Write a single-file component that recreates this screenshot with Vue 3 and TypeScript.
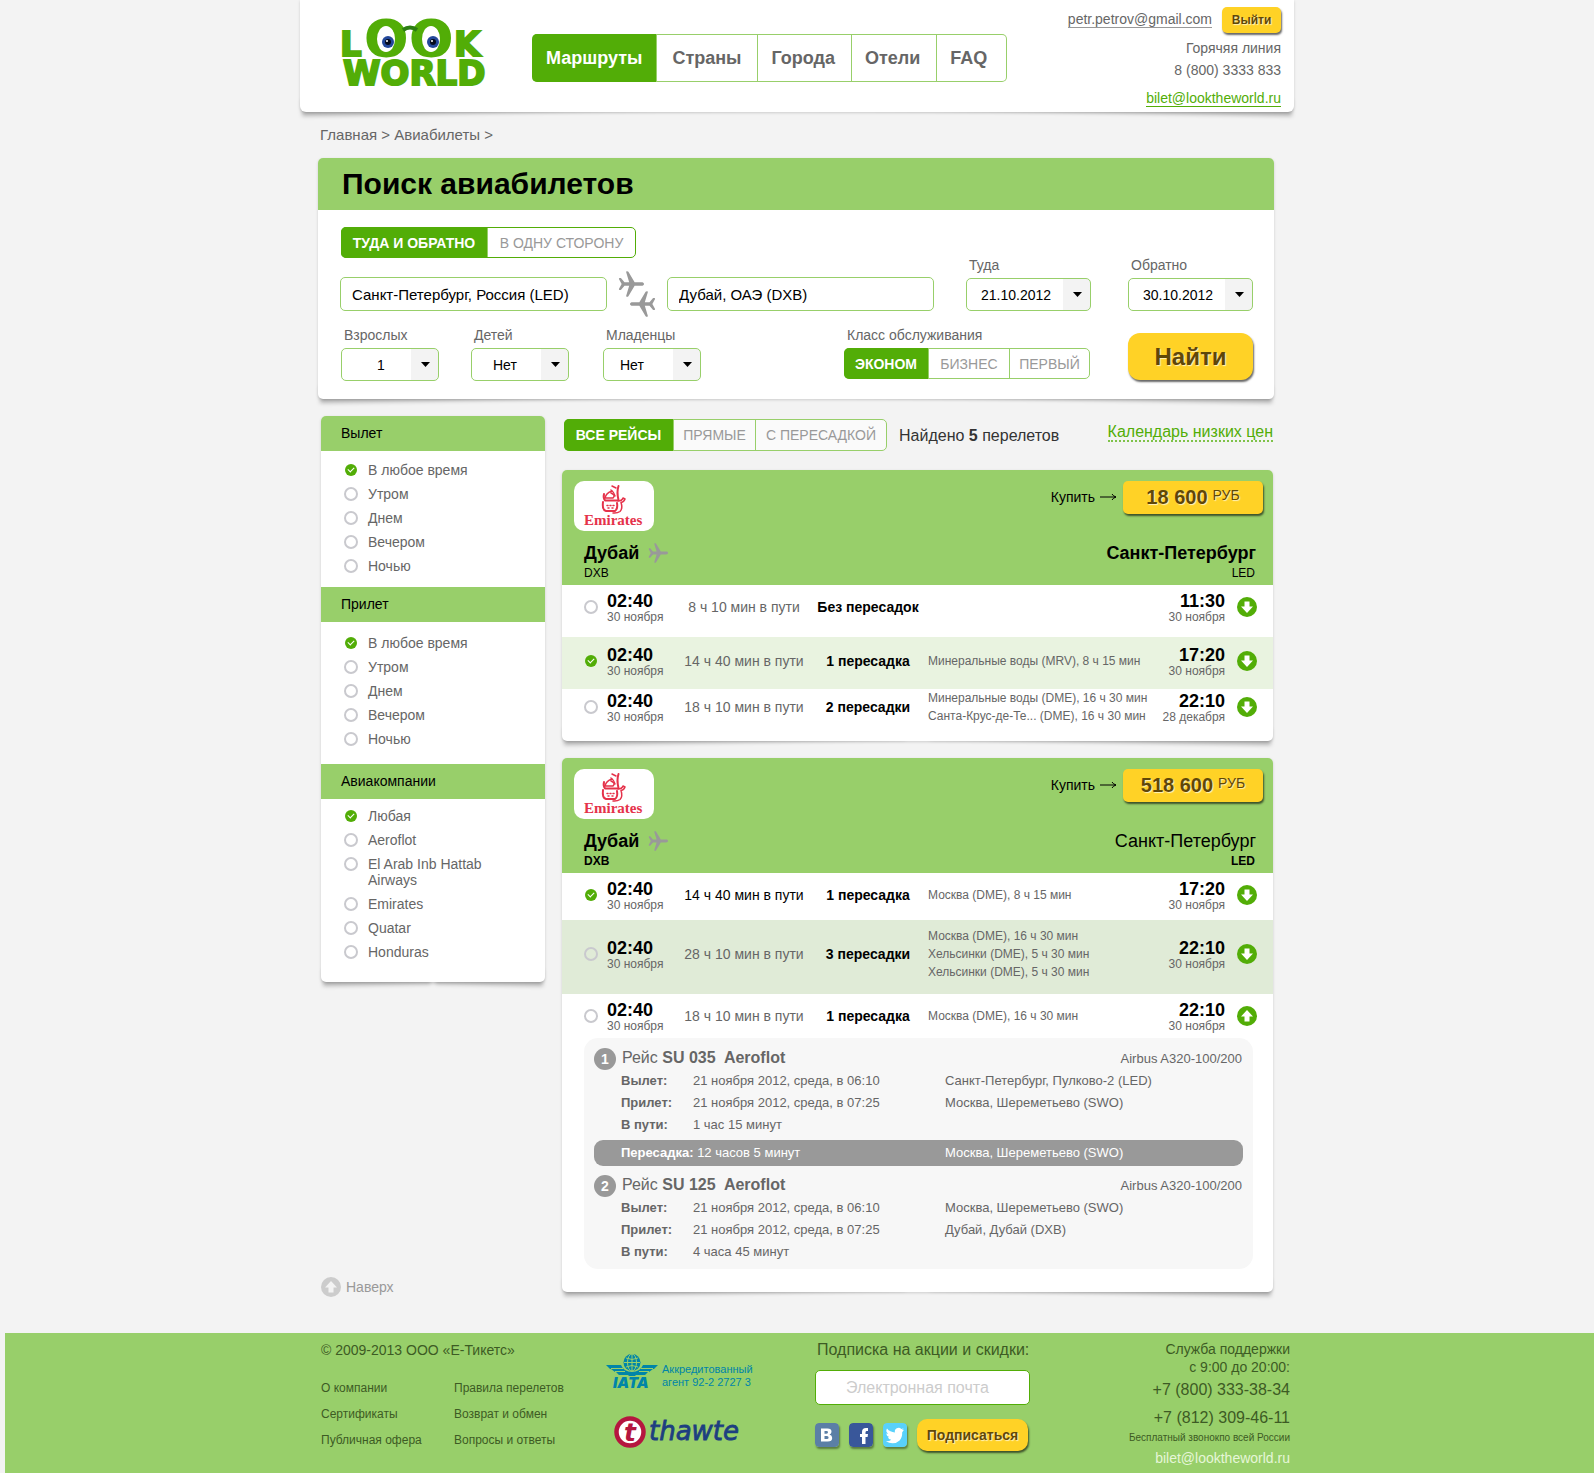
<script setup lang="ts">
import { ref } from 'vue'

interface Flight {
  time: string
  duration: string
  strong?: boolean
  stops: string
  via: string[]
  arrive: string
  arriveDate: string
  tone: string
  open?: boolean
}

interface Card {
  price: string
  boldTo: boolean
  boldCodes: boolean
  picked: number
  flights: Flight[]
  legs: Leg[]
}

interface Leg {
  flight: string
  rows: { label: string; value: string; place: string }[]
  transfer?: { time: string; place: string }
}

const nav = ['Маршруты', 'Страны', 'Города', 'Отели', 'FAQ']
const tripTypes = ['ТУДА И ОБРАТНО', 'В ОДНУ СТОРОНУ']
const classes = ['ЭКОНОМ', 'БИЗНЕС', 'ПЕРВЫЙ']
const stopsTabs = ['ВСЕ РЕЙСЫ', 'ПРЯМЫЕ', 'С ПЕРЕСАДКОЙ']

const trip = ref(0)
const cabin = ref(0)
const stopsTab = ref(0)
const from = ref('Санкт-Петербург, Россия (LED)')
const to = ref('Дубай, ОАЭ (DXB)')

const times = ['В любое время', 'Утром', 'Днем', 'Вечером', 'Ночью']
const filters = ref([
  { id: 'departure', title: 'Вылет', options: times, picked: 0 },
  { id: 'arrival', title: 'Прилет', options: times, picked: 0 },
  {
    id: 'airline',
    title: 'Авиакомпании',
    options: ['Любая', 'Aeroflot', 'El Arab Inb Hattab Airways', 'Emirates', 'Quatar', 'Honduras'],
    picked: 0,
  },
])

const passengers = [
  { id: 'adults', label: 'Взрослых', value: '1' },
  { id: 'children', label: 'Детей', value: 'Нет' },
  { id: 'infants', label: 'Младенцы', value: 'Нет' },
]
const dates = [
  { id: 'there', label: 'Туда', value: '21.10.2012' },
  { id: 'back', label: 'Обратно', value: '30.10.2012' },
]

const cards = ref<Card[]>([
  {
    price: '18 600',
    boldTo: true,
    boldCodes: false,
    picked: 1,
    flights: [
      { time: '02:40', duration: '8 ч 10 мин в пути', stops: 'Без пересадок', via: [], arrive: '11:30', arriveDate: '30 ноября', tone: 'roomy' },
      { time: '02:40', duration: '14 ч 40 мин в пути', stops: '1 пересадка', via: ['Минеральные воды (MRV), 8 ч 15 мин'], arrive: '17:20', arriveDate: '30 ноября', tone: 'picked' },
      { time: '02:40', duration: '18 ч 10 мин в пути', stops: '2 пересадки', via: ['Минеральные воды (DME), 16 ч 30 мин', 'Санта-Крус-де-Те... (DME), 16 ч 30 мин'], arrive: '22:10', arriveDate: '28 декабря', tone: 'last' },
    ],
    legs: [],
  },
  {
    price: '518 600',
    boldTo: false,
    boldCodes: true,
    picked: 0,
    flights: [
      { time: '02:40', duration: '14 ч 40 мин в пути', strong: true, stops: '1 пересадка', via: ['Москва (DME), 8 ч 15 мин'], arrive: '17:20', arriveDate: '30 ноября', tone: 'compact' },
      { time: '02:40', duration: '28 ч 10 мин в пути', stops: '3 пересадки', via: ['Москва (DME), 16 ч 30 мин', 'Хельсинки (DME), 5 ч 30 мин', 'Хельсинки (DME), 5 ч 30 мин'], arrive: '22:10', arriveDate: '30 ноября', tone: 'hover' },
      { time: '02:40', duration: '18 ч 10 мин в пути', stops: '1 пересадка', via: ['Москва (DME), 16 ч 30 мин'], arrive: '22:10', arriveDate: '30 ноября', tone: 'opened', open: true },
    ],
    legs: [
      {
        flight: 'SU 035',
        rows: [
          { label: 'Вылет:', value: '21 ноября 2012, среда, в 06:10', place: 'Санкт-Петербург, Пулково-2 (LED)' },
          { label: 'Прилет:', value: '21 ноября 2012, среда, в 07:25', place: 'Москва, Шереметьево (SWO)' },
          { label: 'В пути:', value: '1 час 15 минут', place: '' },
        ],
        transfer: { time: '12 часов 5 минут', place: 'Москва, Шереметьево (SWO)' },
      },
      {
        flight: 'SU 125',
        rows: [
          { label: 'Вылет:', value: '21 ноября 2012, среда, в 06:10', place: 'Москва, Шереметьево (SWO)' },
          { label: 'Прилет:', value: '21 ноября 2012, среда, в 07:25', place: 'Дубай, Дубай (DXB)' },
          { label: 'В пути:', value: '4 часа 45 минут', place: '' },
        ],
      },
    ],
  },
])

const footerLinks = [
  ['О компании', 'Сертификаты', 'Публичная офера'],
  ['Правила перелетов', 'Возврат и обмен', 'Вопросы и ответы'],
]

const plane =
  'M20 10c0-.9-.8-1.4-2-1.4h-5.2L8 .6C7.6 0 6 0 6.3.9L8.6 8.6H5L2.4 5.6C1.8 5 .3 5.4.8 6.3L2.8 10l-2 3.7c-.5.9 1 1.3 1.6.7L5 11.4h3.6L6.3 19.1c-.3.9 1.3.9 1.7.3l4.8-8H18c1.2 0 2-.5 2-1.4z'
const arrowDown = 'M7.500 4.500h5v5H16L10 16 4 9.500h3.500z'
const arrowUp = 'M7.500 15.500h5v-5H16L10 4 4 10.500h3.500z'
</script>

<template>
  <div class="page">
    <header class="top lifted">
      <a class="logo" href="#" aria-label="Look World">
        <svg width="148" height="72" viewBox="0 0 148 72">
          <g fill="#52ad07" stroke="#52ad07" stroke-width="2" font-family="DejaVu Sans, sans-serif" font-weight="bold">
            <text x="-2" y="41" font-size="34">L</text>
            <text x="23" y="41" font-size="50">O</text>
            <text x="68" y="41" font-size="50">O</text>
            <text x="112" y="41" font-size="34">K</text>
            <text x="1" y="70" font-size="34">WORLD</text>
          </g>
          <path d="M61 15q7-5 14 0" fill="none" stroke="#2c7d12" stroke-width="4" />
          <ellipse cx="44" cy="24" rx="9" ry="13" fill="#fff" />
          <ellipse cx="89" cy="24" rx="9" ry="13" fill="#fff" />
          <g>
            <circle cx="46" cy="27" r="6" fill="#23479a" />
            <circle cx="46" cy="27" r="3" fill="#050a1c" />
            <circle cx="45" cy="26" r="1" fill="#fff" />
            <circle cx="91" cy="27" r="6" fill="#23479a" />
            <circle cx="91" cy="27" r="3" fill="#050a1c" />
            <circle cx="90" cy="26" r="1" fill="#fff" />
          </g>
        </svg>
      </a>
      <nav class="menu">
        <a v-for="(n, i) in nav" :key="n" href="#" :class="{ on: i === 0 }">{{ n }}</a>
      </nav>
      <div class="contacts">
        <div class="account">
          <a href="#" class="user">petr.petrov@gmail.com</a>
          <button type="button" class="yellow exit">Выйти</button>
        </div>
        <span>Горячяя линия</span>
        <span>8 (800) 3333 833</span>
        <a href="#" class="mail">bilet@looktheworld.ru</a>
      </div>
    </header>

    <main class="content">
      <nav class="crumbs"><a href="#">Главная</a> &gt; <a href="#">Авиабилеты</a> &gt;</nav>

      <form class="search lifted" @submit.prevent>
        <h1>Поиск авиабилетов</h1>
        <div class="search-body">
          <div class="seg strong trip">
            <button v-for="(t, i) in tripTypes" :key="t" type="button" :class="{ on: trip === i }" @click="trip = i">{{ t }}</button>
          </div>
          <div class="line route">
            <input v-model="from" type="text" aria-label="Откуда" />
            <svg class="planes" width="38" height="46" viewBox="0 0 38 46" fill="#999">
              <path :d="plane" transform="scale(1.3)" />
              <path :d="plane" transform="translate(38 20) scale(-1.3 1.3)" />
            </svg>
            <input v-model="to" type="text" aria-label="Куда" />
            <div v-for="d in dates" :key="d.id" class="field date">
              <label :for="d.id">{{ d.label }}</label>
              <div class="pick">
                <select :id="d.id"><option>{{ d.value }}</option></select>
                <svg width="9" height="5" viewBox="0 0 9 5"><path d="M0 0h9L4.500 5z" /></svg>
              </div>
            </div>
          </div>
          <div class="line people">
            <div v-for="p in passengers" :key="p.id" class="field" :class="p.id">
              <label :for="p.id">{{ p.label }}</label>
              <div class="pick">
                <select :id="p.id"><option>{{ p.value }}</option></select>
                <svg width="9" height="5" viewBox="0 0 9 5"><path d="M0 0h9L4.500 5z" /></svg>
              </div>
            </div>
            <div class="field cabin">
              <span>Класс обслуживания</span>
              <div class="seg classes">
                <button v-for="(c, i) in classes" :key="c" type="button" :class="{ on: cabin === i }" @click="cabin = i">{{ c }}</button>
              </div>
            </div>
            <button type="submit" class="yellow find">Найти</button>
          </div>
        </div>
      </form>

      <div class="columns">
        <aside>
          <div class="filters lifted">
            <fieldset v-for="f in filters" :key="f.id" :class="f.id">
              <legend>{{ f.title }}</legend>
              <div class="options">
                <label v-for="(o, i) in f.options" :key="o">
                  <input v-model="f.picked" type="radio" :name="f.id" :value="i" /><span>{{ o }}</span>
                </label>
              </div>
            </fieldset>
          </div>
          <a href="#" class="up">
            <svg width="20" height="20" viewBox="0 0 20 20"><circle cx="10" cy="10" r="10" fill="#ccc" /><path :d="arrowUp" fill="#f3f3f3" /></svg>
            Наверх
          </a>
        </aside>

        <section class="results">
          <div class="bar">
            <div class="seg tabs">
              <button v-for="(s, i) in stopsTabs" :key="s" type="button" :class="{ on: stopsTab === i }" @click="stopsTab = i">{{ s }}</button>
            </div>
            <p>Найдено <b>5</b> перелетов</p>
            <a href="#">Календарь низких цен</a>
          </div>

          <article v-for="(c, ci) in cards" :key="ci" class="card lifted">
            <div class="card-head">
              <div class="buy-row">
                <svg class="emirates" width="80" height="50" viewBox="0 0 80 50">
                  <rect width="80" height="50" rx="10" fill="#fff" />
                  <g fill="none" stroke="#e5324a" stroke-width="1.500" stroke-linecap="round" stroke-linejoin="round">
                    <path d="M44.500 5q-2 6 0 14" stroke-width="2" />
                    <path d="M38 5l4 2M37 9q3 2 4 6" />
                    <path d="M38 10q-6 2-7 7h8q3-3-2-5" />
                    <path d="M30 13q-1 4 1 6.500h13" stroke-width="2" />
                    <path d="M29 21q-1 8 3 9h9q3-2 2-8" stroke-width="2" />
                    <path d="M44 20q4 0 5-3l2 1q-1 3-4 3.500 2 6-1 9-3 2-7 1.500" />
                    <path d="M33 24.500h1M36 24.500h1M39 24.500h1M34 27h1M38 27h1" />
                  </g>
                  <text x="10" y="44" fill="#e5324a" font-family="Liberation Serif, serif" font-weight="bold" font-size="15">Emirates</text>
                </svg>
                <span class="buy-label">Купить</span>
                <svg width="17" height="8" viewBox="0 0 17 8"><path d="M0 4h16M12 1q1 2 4 3-3 1-4 3" fill="none" stroke="#000" stroke-width="1" /></svg>
                <button type="button" class="yellow price"><b>{{ c.price }}</b><span>РУБ</span></button>
              </div>
              <div class="cities">
                <h2>Дубай</h2>
                <svg width="20" height="20" viewBox="0 0 20 20"><path :d="plane" fill="#999" /></svg>
                <h2 class="to" :class="{ plain: !c.boldTo }">Санкт-Петербург</h2>
              </div>
              <div class="codes" :class="{ bold: c.boldCodes }"><span>DXB</span><span>LED</span></div>
            </div>
            <table class="flights">
              <colgroup>
                <col class="c-radio" /><col class="c-time" /><col class="c-dur" /><col class="c-stops" /><col /><col class="c-arr" /><col class="c-more" />
              </colgroup>
              <tbody>
                <tr v-for="(f, fi) in c.flights" :key="fi" :class="f.tone">
                  <td class="sel"><input v-model="c.picked" type="radio" :name="'flight' + ci" :value="fi" :aria-label="f.duration" /></td>
                  <td><b class="time">{{ f.time }}</b><span class="day">30 ноября</span></td>
                  <td class="dur" :class="{ dark: f.strong }">{{ f.duration }}</td>
                  <td class="stops">{{ f.stops }}</td>
                  <td class="via"><div v-for="(v, vi) in f.via" :key="vi">{{ v }}</div></td>
                  <td class="arr"><b class="time">{{ f.arrive }}</b><span class="day">{{ f.arriveDate }}</span></td>
                  <td class="more">
                    <button type="button" aria-label="Подробнее">
                      <svg width="20" height="20" viewBox="0 0 20 20"><circle cx="10" cy="10" r="10" fill="#52ad07" /><path :d="f.open ? arrowUp : arrowDown" fill="#fff" /></svg>
                    </button>
                  </td>
                </tr>
              </tbody>
            </table>
            <div v-if="c.legs.length" class="details">
              <div v-for="(l, li) in c.legs" :key="li">
                <div class="leg-head">
                  <span class="num">{{ li + 1 }}</span>
                  <span class="flight">Рейс <b>{{ l.flight }}&nbsp; Aeroflot</b></span>
                  <span class="craft">Airbus A320-100/200</span>
                </div>
                <table class="leg">
                  <tbody>
                    <tr v-for="r in l.rows" :key="r.label">
                      <th scope="row">{{ r.label }}</th>
                      <td>{{ r.value }}</td>
                      <td>{{ r.place }}</td>
                    </tr>
                  </tbody>
                </table>
                <div v-if="l.transfer" class="transfer">
                  <span><b>Пересадка:</b> {{ l.transfer.time }}</span>
                  <span>{{ l.transfer.place }}</span>
                </div>
              </div>
            </div>
          </article>
        </section>
      </div>
    </main>

    <footer>
      <div class="foot">
        <div class="about">
          <p>© 2009-2013 ООО «Е-Тикетс»</p>
          <div class="links">
            <ul v-for="(col, i) in footerLinks" :key="i">
              <li v-for="t in col" :key="t"><a href="#">{{ t }}</a></li>
            </ul>
          </div>
        </div>
        <div class="partners">
          <div class="iata">
            <svg width="53" height="35" viewBox="0 0 53 35" fill="#0085a8">
              <circle cx="26" cy="8.500" r="8.500" />
              <g fill="none" stroke="#98cf6a" stroke-width="1">
                <path d="M26 0v17M18 8.500h16M20 4q6 3 12 0M20 13q6-3 12 0" />
                <ellipse cx="26" cy="8.500" rx="4.500" ry="8.500" />
              </g>
              <path d="M0 11h15q3 7 11 7t11-7h15l-4 4h-1l-4 3h-1l-3 3H30l-1 1h-6l-1-1H13l-3-3H9l-4-3H4z" />
              <path d="M5 14.500h12M9 17.500h10M35 14.500h12M33 17.500h10" stroke="#98cf6a" stroke-width="1" />
              <text x="7" y="34" font-family="Inter, sans-serif" font-weight="900" font-style="italic" font-size="15">IATA</text>
            </svg>
            <span>Аккредитованный<br />агент 92-2 2727 3</span>
          </div>
          <svg class="thawte" width="130" height="34" viewBox="0 0 130 34">
            <circle cx="16" cy="17" r="13.500" fill="#fff" stroke="#b5163f" stroke-width="4.500" />
            <text x="10" y="26" font-family="DejaVu Sans, sans-serif" font-weight="bold" font-style="italic" font-size="25" fill="#b5163f">t</text>
            <text x="35" y="25" font-family="DejaVu Sans, sans-serif" font-style="italic" font-size="26" fill="#1d3f80" stroke="#1d3f80" stroke-width=".8">thawte</text>
          </svg>
        </div>
        <form class="subscribe" @submit.prevent>
          <label for="email">Подписка на акции и скидки:</label>
          <input id="email" type="email" placeholder="Электронная почта" />
          <div class="social">
            <a href="#" aria-label="ВКонтакте">
              <svg width="24" height="24" viewBox="0 0 24 24"><rect width="24" height="24" rx="4" fill="#5b7fa6" /><path d="M6 5.500h6.500q4 0 4 3.200 0 2.100-2 2.900 2.700.7 2.700 3.400 0 3.500-4.500 3.500H6zM9.500 8v2.700h2q1.500 0 1.500-1.400T11.500 8zm0 5v3h2.500q1.600 0 1.600-1.500T12 13z" fill="#fff" fill-rule="evenodd" /></svg>
            </a>
            <a href="#" aria-label="Facebook">
              <svg width="24" height="24" viewBox="0 0 24 24"><rect width="24" height="24" rx="4" fill="#39579a" /><path d="M13 21v-7h-2v-3h2V9q0-4 4-4h2v3h-1.500Q16.500 8 16.500 9.500V11H19l-.4 3h-2.100v7z" fill="#fff" /></svg>
            </a>
            <a href="#" aria-label="Twitter">
              <svg width="24" height="24" viewBox="0 0 24 24"><rect width="24" height="24" rx="4" fill="#59d1fb" /><path d="M21 6.500q-1 .5-2 .6 1-.7 1.500-1.900-1 .6-2.200.8a3.800 3.800 0 0 0-6.400 3.500Q7 9.300 4 5.600q-1.800 3.200 1.100 5.200-.8 0-1.700-.5 0 3 3 3.800-.8.200-1.600.1.800 2.400 3.500 2.600Q6 18.600 2.700 18.300q8 4.500 13.900-.9 2.800-3.200 2.600-8.200 1.100-.9 1.800-2.700z" fill="#fff" /></svg>
            </a>
            <button type="submit" class="yellow send">Подписаться</button>
          </div>
        </form>
        <address>
          <span class="hours">Служба поддержки<br />с 9:00 до 20:00:</span>
          <span class="phone">+7 (800) 333-38-34</span>
          <span class="phone">+7 (812) 309-46-11</span>
          <small>Бесплатный звонокпо всей России</small>
          <a href="#">bilet@looktheworld.ru</a>
        </address>
      </div>
    </footer>
  </div>
</template>

<style>
body {
  margin: 0;
  background: #f3f3f3;
}
</style>

<style scoped>
.page {
  isolation: isolate;
  font: 14px/16px "Liberation Sans", Arial, sans-serif;
  color: #666;
}
.page *,
.page *::before,
.page *::after {
  box-sizing: border-box;
}
a {
  color: inherit;
  text-decoration: none;
}
button,
input,
select {
  font: inherit;
  margin: 0;
}
button {
  cursor: pointer;
}
h1,
h2,
p,
ul {
  margin: 0;
  padding: 0;
}

.lifted {
  position: relative;
  background: #fff;
  border-radius: 5px;
  box-shadow: 0 1px 3px rgba(0, 0, 0, 0.16);
}
.lifted::before,
.lifted::after {
  content: "";
  position: absolute;
  z-index: -1;
  bottom: 5px;
  left: 2px;
  width: 48%;
  height: 16px;
  box-shadow: 0 9px 4px rgba(0, 0, 0, 0.26);
  transform: rotate(-1deg);
  transform-origin: 0 100%;
}
.lifted::after {
  left: auto;
  right: 2px;
  transform: rotate(1deg);
  transform-origin: 100% 100%;
}

.yellow {
  border: 0;
  background: #ffd226;
  color: #5f4708;
  font-weight: bold;
  text-shadow: 1px 1px 1px #fff3c0;
  box-shadow: 1px 2px 2px rgba(0, 0, 0, 0.6);
}

.top {
  display: flex;
  align-items: flex-start;
  max-width: 994px;
  height: 112px;
  margin: 0 auto;
  padding: 0 13px 0 42px;
  border-radius: 0 0 6px 6px;
}
.logo {
  padding-top: 15px;
}
.logo svg {
  display: block;
  overflow: visible;
}
.menu {
  display: flex;
  height: 48px;
  margin: 34px 0 0 42px;
  border: 1px solid #98cf6a;
  border-left: 0;
  border-radius: 5px;
  font: bold 18px/46px "Liberation Sans", Arial, sans-serif;
}
.menu a {
  padding: 0 16px 0 13px;
  border-left: 1px solid #98cf6a;
}
.menu a:first-child {
  margin: -1px 0;
  padding: 0 14px;
  border: 0;
  border-radius: 5px 0 0 5px;
  line-height: 48px;
}
.menu a:nth-child(2) {
  padding-left: 15px;
}
.menu a:last-child {
  padding-right: 19px;
}
.menu .on {
  background: #52ad07;
  color: #fff;
}
.contacts {
  display: flex;
  flex-direction: column;
  align-items: flex-end;
  margin-left: auto;
  padding-top: 7px;
  line-height: 22px;
}
.account {
  display: flex;
  align-items: flex-start;
  gap: 10px;
  margin-bottom: 4px;
}
.user {
  margin-top: 4px;
  border-bottom: 1px solid #999;
  line-height: 16px;
}
.exit {
  width: 59px;
  height: 26px;
  padding: 0;
  border-radius: 5px;
  font-size: 12px;
}
.mail {
  margin-top: 9px;
  border-bottom: 1px solid #52ad07;
  color: #52ad07;
  line-height: 16px;
}

.content {
  max-width: 994px;
  margin: 0 auto;
  padding: 0 20px 0 18px;
}
.crumbs {
  padding-left: 2px;
  font-size: 15px;
  line-height: 46px;
}

.search h1 {
  padding-left: 24px;
  border-radius: 5px 5px 0 0;
  background: #98cf6a;
  color: #000;
  font-size: 30px;
  line-height: 52px;
}
.search-body {
  padding: 17px 21px 18px 22px;
}
.seg {
  display: grid;
  height: 31px;
  border: 1px solid #98cf6a;
  border-radius: 5px;
  background: #fff;
}
.seg button {
  padding: 0;
  border: 0;
  border-left: 1px solid #98cf6a;
  background: none;
  color: #999;
}
.seg button:first-child {
  margin: -1px 0 -1px -1px;
  border: 0;
  border-radius: 5px 0 0 5px;
}
.seg .on {
  background: #52ad07;
  color: #fff;
  font-weight: bold;
}
.seg.strong {
  border-color: #52ad07;
}
.trip {
  grid-template-columns: 145px 1fr;
  width: 295px;
  margin-left: 1px;
}
.classes {
  grid-template-columns: 83px 81px 1fr;
}
.line {
  display: flex;
  align-items: flex-end;
}
.route {
  height: 53px;
}
.route input {
  flex: 1;
  min-width: 0;
  height: 34px;
  padding: 0 11px;
  border: 1px solid #98cf6a;
  border-radius: 5px;
  background: #fff;
  color: #000;
  font-size: 15px;
}
.planes {
  flex: none;
  margin: 0 11px -6px;
}
.field {
  flex: none;
  width: 98px;
}
.field label,
.field > span {
  display: block;
  padding-left: 3px;
  line-height: 16px;
  margin-bottom: 5px;
}
.date {
  width: 125px;
  margin-left: 32px;
}
.date + .date {
  margin-left: 37px;
}
.pick {
  position: relative;
}
.pick select {
  display: block;
  width: 100%;
  height: 33px;
  padding: 0 32px 0 14px;
  appearance: none;
  border: 1px solid #98cf6a;
  border-radius: 5px;
  background: linear-gradient(90deg, transparent calc(100% - 27px), #f3f3f3 calc(100% - 27px));
  color: #000;
}
.pick svg {
  position: absolute;
  right: 9px;
  top: 14px;
  pointer-events: none;
}
.people {
  height: 70px;
}
.people .field {
  margin-left: 32px;
}
.people .adults {
  margin-left: 1px;
}
.people .infants {
  margin-left: 34px;
}
.adults select {
  padding-left: 35px;
}
.children select {
  padding-left: 21px;
}
.infants select {
  padding-left: 16px;
}
.people .cabin {
  width: 246px;
  margin: 0 38px 2px auto;
}
.find {
  width: 125px;
  height: 47px;
  margin-bottom: 1px;
  border-radius: 12px;
  font-size: 24px;
}

.columns {
  display: flex;
  gap: 17px;
  padding: 17px 1px 0 3px;
}
aside {
  display: flex;
  flex: none;
  flex-direction: column;
  width: 224px;
}
.filters {
  min-height: 566px;
}
fieldset {
  margin: 0;
  padding: 0;
  border: 0;
}
legend {
  display: block;
  width: 100%;
  padding: 0 0 0 20px;
  background: #98cf6a;
  color: #000;
  line-height: 35px;
}
fieldset:first-child legend {
  border-radius: 5px 5px 0 0;
}
.options {
  display: flex;
  flex-direction: column;
  gap: 8px;
  padding: 11px 40px 13px 23px;
}
.arrival .options {
  padding-top: 13px;
  padding-bottom: 17px;
}
.airline .options {
  padding-top: 9px;
}
.options label {
  display: flex;
  align-items: flex-start;
  gap: 10px;
}
input[type="radio"] {
  position: relative;
  flex: none;
  display: block;
  width: 14px;
  height: 14px;
  appearance: none;
  border: 2px solid #c9c9ce;
  border-radius: 50%;
}
.options input {
  margin-top: 1px;
}
input[type="radio"]:checked {
  border: 1px solid transparent;
  background: #52ad07 padding-box;
}
input[type="radio"]:checked::after {
  content: "";
  position: absolute;
  left: 3px;
  top: 3px;
  width: 6px;
  height: 4px;
  border: solid #fff;
  border-width: 0 0 1px 1px;
  transform: rotate(-45deg);
}
.up {
  display: flex;
  align-items: center;
  gap: 5px;
  margin-top: auto;
  color: #999;
}

.results {
  flex: 1;
  min-width: 0;
  padding: 3px 0 5px;
}
.bar {
  display: flex;
  align-items: center;
  padding-left: 2px;
  margin-bottom: 19px;
  color: #333;
  font-size: 16px;
}
.tabs {
  grid-template-columns: 108px 82px 1fr;
  width: 323px;
  height: 32px;
  background: #fafafa;
  font-size: 14px;
}
.bar p {
  margin: 2px 0 0 12px;
}
.bar a {
  margin: 0 0 5px auto;
  border-bottom: 2px dotted #7fc24a;
  color: #52ad07;
}

.card + .card {
  margin-top: 17px;
}
.card:last-child {
  padding-bottom: 23px;
}
.card-head {
  height: 115px;
  padding: 11px 10px 0 12px;
  border-radius: 5px 5px 0 0;
  background: #98cf6a;
  color: #000;
}
.buy-row {
  display: flex;
  align-items: flex-start;
  height: 50px;
}
.buy-label {
  margin-left: auto;
  line-height: 33px;
}
.buy-label + svg {
  margin: 12px 6px 0 5px;
}
.price {
  display: flex;
  justify-content: center;
  gap: 5px;
  width: 140px;
  height: 33px;
  padding: 0;
  border-radius: 5px;
  font-size: 20px;
  line-height: 33px;
}
.price span {
  font-size: 14px;
  font-weight: normal;
  line-height: 28px;
}
.cities {
  display: flex;
  align-items: center;
  gap: 9px;
  margin: 12px 7px 0 10px;
}
h2 {
  font-size: 18px;
  line-height: 20px;
}
.to {
  margin-left: auto;
}
.plain {
  font-weight: normal;
}
.codes {
  display: flex;
  justify-content: space-between;
  margin: 1px 8px 0 10px;
  font-size: 12px;
  line-height: 18px;
}
.codes.bold {
  font-weight: bold;
}

table {
  width: 100%;
  border-collapse: collapse;
  table-layout: fixed;
}
.c-radio {
  width: 45px;
}
.c-time {
  width: 73px;
}
.c-dur {
  width: 128px;
}
.c-stops {
  width: 120px;
}
.c-arr {
  width: 75px;
}
.c-more {
  width: 48px;
}
.flights td {
  padding: 6px 0 14px;
  vertical-align: middle;
  white-space: nowrap;
}
.flights .picked td {
  padding: 8px 0 12px;
  background: #e9f3e0;
}
.flights .last td {
  padding: 0 0 16px;
}
.flights .compact td {
  padding: 6px 0 9px;
}
.flights .hover td {
  padding: 7px 0 13px;
  background: #e0ebd7;
}
.flights .opened td {
  padding: 6px 0;
}
.flights .sel input {
  margin-left: 22px;
}
.time {
  display: block;
  color: #000;
  font-size: 18px;
  line-height: 20px;
}
.day {
  display: block;
  font-size: 12px;
  line-height: 12px;
}
.dur {
  text-align: center;
}
.dark {
  color: #000;
}
.stops {
  color: #000;
  font-weight: bold;
  text-align: center;
}
.via {
  font-size: 12px;
  line-height: 18px;
}
.arr {
  text-align: right;
}
.more button {
  display: block;
  margin-left: 12px;
  padding: 0;
  border: 0;
  background: none;
}
.more svg {
  display: block;
}

.details {
  margin: 0 20px 0 22px;
  padding: 9px 10px 6px;
  border-radius: 14px;
  background: #f7f7f7;
  font-size: 13px;
}
.leg-head {
  display: flex;
  align-items: flex-start;
  height: 23px;
}
.num {
  width: 22px;
  height: 22px;
  margin: 1px 6px 0 0;
  border-radius: 50%;
  background: #999;
  color: #fff;
  font: bold 14px/22px "Liberation Sans", Arial, sans-serif;
  text-align: center;
}
.flight {
  font-size: 16px;
  line-height: 22px;
}
.craft {
  margin: 1px 1px 0 auto;
  line-height: 22px;
}
.leg th,
.leg td {
  padding: 0;
  line-height: 22px;
  text-align: left;
}
.leg th {
  width: 99px;
  padding-left: 27px;
}
.leg td:nth-child(2) {
  width: 252px;
}
.transfer {
  display: flex;
  margin: 4px 0 8px;
  padding-left: 27px;
  border-radius: 9px;
  background: #999;
  color: #fff;
  line-height: 26px;
}
.transfer span:first-child {
  width: 324px;
}

footer {
  margin: 36px 0 0 5px;
  background: #98cf6a;
  color: #3d5b24;
}
.foot {
  display: flex;
  align-items: flex-start;
  max-width: 995px;
  height: 140px;
  margin: 0 auto;
  padding: 0 7px 0 19px;
}
.about {
  width: 285px;
}
.about p {
  padding-top: 9px;
}
.links {
  display: flex;
  margin-top: 17px;
  font-size: 12px;
  line-height: 26px;
}
.links ul {
  width: 133px;
  list-style: none;
}
.partners {
  width: 209px;
}
.iata {
  display: flex;
  align-items: flex-end;
  gap: 3px;
  margin-top: 21px;
  color: #0085a8;
  font-size: 11px;
  line-height: 13px;
}
.iata svg {
  flex: none;
  overflow: visible;
}
.thawte {
  display: block;
  margin: 26px 0 0 8px;
}
.subscribe {
  width: 215px;
}
.subscribe label {
  display: block;
  padding: 9px 0 12px 2px;
  font-size: 16px;
  white-space: nowrap;
}
.subscribe input {
  display: block;
  width: 100%;
  height: 35px;
  padding: 0 30px;
  border: 1px solid #52ad07;
  border-radius: 5px;
  background: #fff;
  font-size: 16px;
}
.subscribe input::placeholder {
  color: #ccc;
}
.social {
  display: flex;
  align-items: center;
  gap: 10px;
  margin-top: 14px;
}
.social svg {
  display: block;
  border-radius: 4px;
  box-shadow: 1px 2px 2px rgba(0, 0, 0, 0.4);
}
.send {
  width: 111px;
  height: 32px;
  padding: 0;
  border-radius: 10px;
}
address {
  display: flex;
  flex-direction: column;
  align-items: flex-end;
  margin-left: auto;
  padding-top: 7px;
  font-style: normal;
  text-align: right;
}
.hours {
  margin-bottom: 2px;
  line-height: 18px;
}
.phone {
  margin-bottom: 4px;
  font-size: 16px;
  line-height: 24px;
}
small {
  margin-top: -4px;
  font-size: 10px;
  line-height: 16px;
}
address a {
  margin-top: 4px;
  color: #e6f6d8;
}
</style>
